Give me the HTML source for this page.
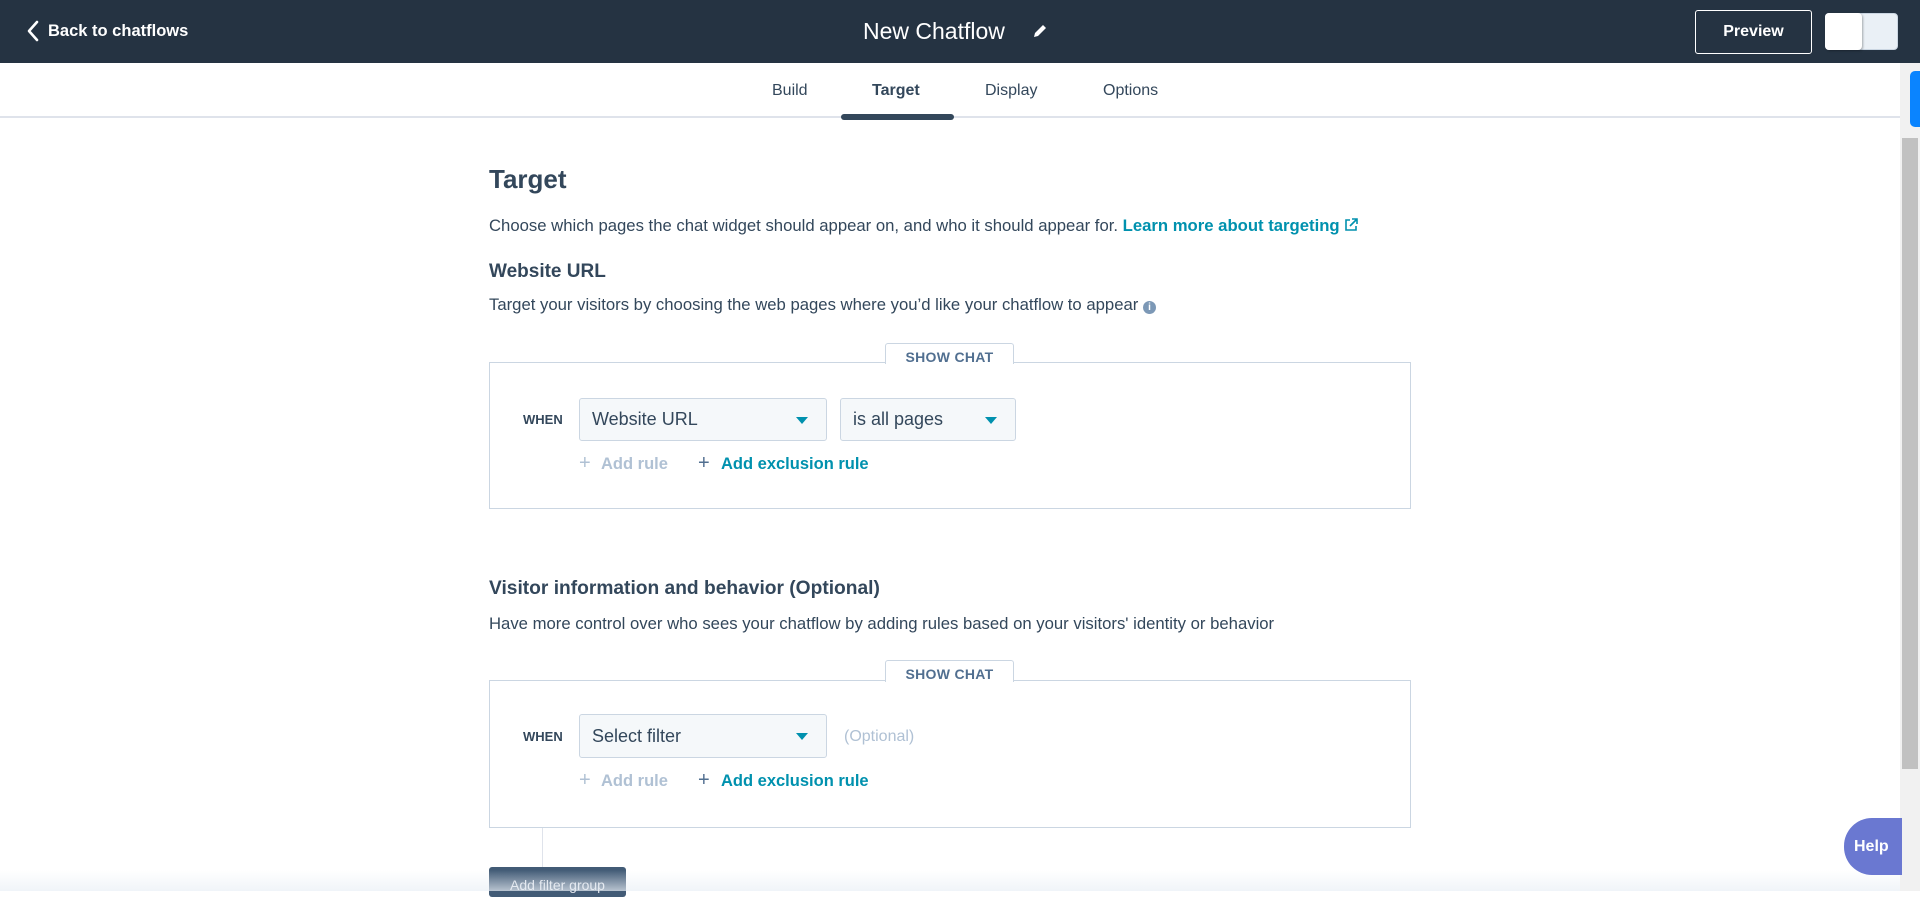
<!DOCTYPE html>
<html><head><meta charset="utf-8"><style>
*{box-sizing:border-box;margin:0;padding:0}
body{width:1920px;height:891px;overflow:hidden;background:#fff;font-family:"Liberation Sans",sans-serif;color:#33475b;position:relative}
.abs{position:absolute}
.hdr{left:0;top:0;width:1920px;height:63px;background:#253342;color:#fff}
.tabs{top:63px;left:0;width:1900px;height:55px;border-bottom:2px solid #dfe3eb}
.tab{top:82px;font-size:16px;color:#33475b}
.sel{background:#f5f8fa;border:1px solid #cbd6e2;border-radius:3px;font-size:18px;color:#33475b;padding-left:12px;display:flex;align-items:center}
.tri{position:absolute;right:18px;top:50%;margin-top:-3px;width:0;height:0;border-left:6px solid transparent;border-right:6px solid transparent;border-top:7px solid #0091ae}
.box{border:1px solid #cbd6e2;background:#fff}
.stab{background:#fff;border:1px solid #cbd6e2;border-bottom:none;border-radius:3px 3px 0 0;font-size:14px;font-weight:bold;color:#516f90;text-align:center;letter-spacing:.3px}
.when{font-size:13px;font-weight:bold;color:#33475b}
.add{font-size:16.5px;font-weight:bold}
.plus{position:absolute;font-size:20px;font-weight:normal;top:-3px}
.txt{font-size:16.7px}
</style></head><body>
<div class="abs hdr">
 <svg class="abs" style="left:26px;top:20px" width="14" height="22" viewBox="0 0 14 22"><path d="M11 2 L3 11 L11 20" stroke="#fff" stroke-width="2.6" fill="none" stroke-linecap="round" stroke-linejoin="round"/></svg>
 <div class="abs" style="left:48px;top:22px;font-size:16.5px;font-weight:bold">Back to chatflows</div>
 <div class="abs" style="left:863px;top:18px;font-size:23px">New Chatflow</div>
 <svg class="abs" style="left:1032px;top:23px" width="16" height="16" viewBox="0 0 16 16"><path d="M2 14 L3 10 L11 2 L14 5 L6 13 Z" fill="#fff"/></svg>
 <div class="abs" style="left:1695px;top:10px;width:117px;height:44px;border:1px solid #fff;border-radius:3px;font-size:16px;font-weight:bold;text-align:center;line-height:42px">Preview</div>
 <div class="abs" style="left:1825px;top:13px;width:73px;height:37px;background:#eaf0f6;border-radius:4px;border:1px solid #cbd6e2"></div>
 <div class="abs" style="left:1825px;top:13px;width:37px;height:37px;background:#fff;border-radius:4px;box-shadow:1px 1px 2px rgba(0,0,0,.3)"></div>
</div>
<div class="abs tabs"></div>
<div class="abs tab" style="left:772px">Build</div>
<div class="abs tab" style="left:872px;font-weight:bold">Target</div>
<div class="abs tab" style="left:985px">Display</div>
<div class="abs tab" style="left:1103px">Options</div>
<div class="abs" style="left:841px;top:114px;width:113px;height:6px;background:#33475b;border-radius:3px"></div>
<div class="abs" style="left:1900px;top:63px;width:20px;height:828px;background:#f1f1f1"></div>
<div class="abs" style="left:1902px;top:138px;width:16px;height:631px;background:#c1c1c1"></div>
<div class="abs" style="left:1910px;top:71px;width:10px;height:56px;background:#0a84ff;border-radius:5px 0 0 5px"></div>

<div class="abs" style="left:489px;top:164px;font-size:26px;font-weight:bold">Target</div>
<div class="abs txt" style="left:489px;top:216px">Choose which pages the chat widget should appear on, and who it should appear for. <b style="color:#0091ae">Learn more about targeting</b> <svg width="14" height="14" viewBox="0 0 14 14" style="vertical-align:-1px"><path d="M6 2H2v10h10V8M8 1h5v5M13 1L6 8" stroke="#0091ae" stroke-width="1.6" fill="none"/></svg></div>
<div class="abs" style="left:489px;top:261px;font-size:19px;font-weight:bold">Website URL</div>
<div class="abs txt" style="left:489px;top:295px">Target your visitors by choosing the web pages where you’d like your chatflow to appear <span style="display:inline-block;width:13px;height:13px;border-radius:50%;background:#7c98b6;color:#fff;font-size:10px;text-align:center;line-height:13px;font-weight:bold">i</span></div>

<div class="abs box" style="left:489px;top:362px;width:922px;height:147px"></div>
<div class="abs stab" style="left:885px;top:343px;width:129px;height:21px;line-height:26px">SHOW CHAT</div>
<div class="abs when" style="left:523px;top:412px">WHEN</div>
<div class="abs sel" style="left:579px;top:398px;width:248px;height:43px">Website URL<span class="tri"></span></div>
<div class="abs sel" style="left:840px;top:398px;width:176px;height:43px">is all pages<span class="tri"></span></div>
<div class="abs add" style="left:579px;top:455px;color:#b0c1d4"><span class="plus" style="left:0">+</span><span style="margin-left:22px">Add rule</span></div>
<div class="abs add" style="left:698px;top:455px;color:#0091ae"><span class="plus" style="left:0;color:#516f90">+</span><span style="margin-left:23px">Add exclusion rule</span></div>

<div class="abs" style="left:489px;top:578px;font-size:19.2px;font-weight:bold">Visitor information and behavior (Optional)</div>
<div class="abs txt" style="left:489px;top:614px">Have more control over who sees your chatflow by adding rules based on your visitors' identity or behavior</div>

<div class="abs box" style="left:489px;top:680px;width:922px;height:148px"></div>
<div class="abs stab" style="left:885px;top:660px;width:129px;height:22px;line-height:27px">SHOW CHAT</div>
<div class="abs when" style="left:523px;top:729px">WHEN</div>
<div class="abs sel" style="left:579px;top:714px;width:248px;height:44px">Select filter<span class="tri"></span></div>
<div class="abs" style="left:844px;top:728px;font-size:16px;color:#b0c1d4">(Optional)</div>
<div class="abs add" style="left:579px;top:772px;color:#b0c1d4"><span class="plus" style="left:0">+</span><span style="margin-left:22px">Add rule</span></div>
<div class="abs add" style="left:698px;top:772px;color:#0091ae"><span class="plus" style="left:0;color:#516f90">+</span><span style="margin-left:23px">Add exclusion rule</span></div>
<div class="abs" style="left:542px;top:828px;width:1px;height:42px;background:#dfe3eb"></div>
<div class="abs" style="left:489px;top:867px;width:137px;height:30px;background:#425b76;border-radius:3px;color:#dfe3eb;font-size:14px;text-align:center;padding-top:10px">Add filter group</div>
<div class="abs" style="left:0;top:870px;width:1900px;height:21px;background:linear-gradient(rgba(234,240,246,0),rgba(234,240,246,.7))"></div>
<div class="abs" style="left:1844px;top:818px;width:58px;height:57px;background:#6a78d1;border-radius:28px 0 0 28px;color:#fff;font-weight:bold;font-size:16px;line-height:57px;padding-left:10px">Help</div>
</body></html>
